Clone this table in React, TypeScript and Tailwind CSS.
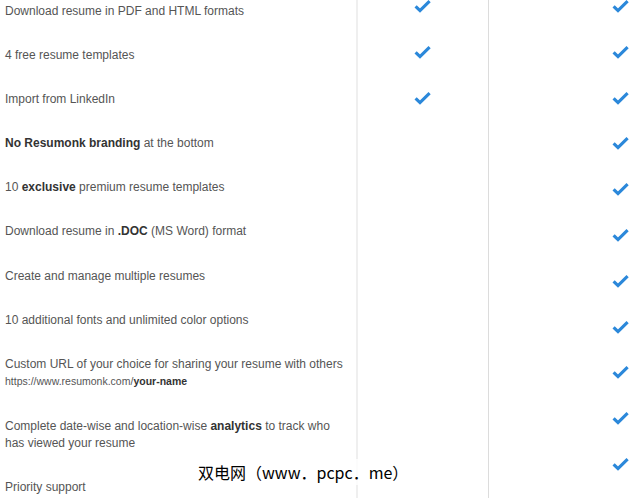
import type { ReactNode } from 'react'

type Feature = { text: ReactNode; free: boolean }

const features: Feature[] = [
  { text: 'Download resume in PDF and HTML formats', free: true },
  { text: '4 free resume templates', free: true },
  { text: 'Import from LinkedIn', free: true },
  {
    text: (
      <>
        <b className="text-[#333]">No Resumonk branding</b> at the bottom
      </>
    ),
    free: false,
  },
  {
    text: (
      <>
        10 <b className="text-[#333]">exclusive</b> premium resume templates
      </>
    ),
    free: false,
  },
  {
    text: (
      <>
        Download resume in <b className="text-[#333]">.DOC</b> (MS Word) format
      </>
    ),
    free: false,
  },
  { text: 'Create and manage multiple resumes', free: false },
  { text: '10 additional fonts and unlimited color options', free: false },
  {
    text: (
      <>
        Custom URL of your choice for sharing your resume with others
        <span className="mb-[1.5px] block text-[10.5px] leading-[16px]">
          https://www.resumonk.com/<b className="text-[#333]">your-name</b>
        </span>
      </>
    ),
    free: false,
  },
  {
    text: (
      <>
        Complete date-wise and location-wise <b className="text-[#333]">analytics</b> to track who
        <br />
        has viewed your resume
      </>
    ),
    free: false,
  },
  { text: 'Priority support', free: false },
]

function Check() {
  return (
    <svg width="17" height="14" viewBox="0 0 17 14" className="block">
      <polyline
        points="1.6,7.4 6,11.6 15.6,2.2"
        fill="none"
        stroke="#2b88da"
        strokeWidth="3.2"
        strokeLinejoin="miter"
      />
    </svg>
  )
}

export default function App() {
  return (
    <div
      className="relative flex h-[498px] w-[640px] overflow-hidden bg-white text-[12px] leading-[17px] text-[#555]"
      style={{ fontFamily: '"Liberation Sans", Arial, sans-serif' }}
    >
      <div className="w-[356px] shrink-0 whitespace-nowrap pl-[5px] pt-[2.5px]">
        {features.map((f, i) => (
          <div key={i} className="pb-[27.2px]">
            {f.text}
          </div>
        ))}
      </div>

      <div className="w-[2px] shrink-0 bg-[#efefef]" />

      <div className="-mt-px w-[131px] shrink-0 border-r border-[#dcdcdc] pl-[56px]">
        {features.map((f, i) => (
          <div key={i} className="h-[45.8px]">
            {f.free && <Check />}
          </div>
        ))}
      </div>

      <div className="-mt-px flex-1 pl-[123px]">
        {features.map((_, i) => (
          <div key={i} className="h-[45.8px]">
            <Check />
          </div>
        ))}
      </div>

      <div
        className="absolute left-[196px] top-[459px] bg-white/80 px-[2px] text-[16px] leading-[26px] text-black"
        style={{ fontFamily: '"Noto Sans CJK SC", sans-serif' }}
      >
        双电网（www．pcpc．me）
      </div>
    </div>
  )
}
